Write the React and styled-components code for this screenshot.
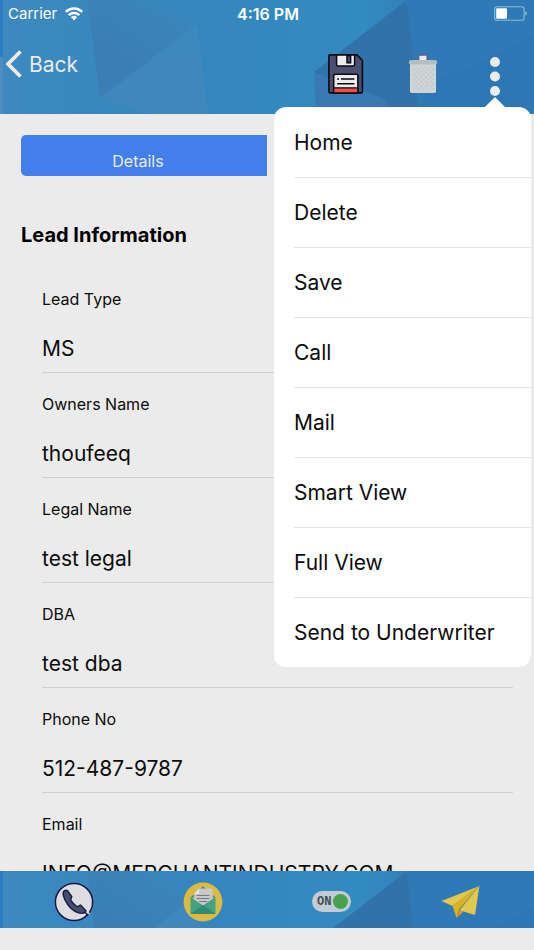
import { useState } from "react";
import styled, { createGlobalStyle } from "styled-components";

const fields = [
  { id: "leadType", label: "Lead Type", value: "MS" },
  { id: "owner", label: "Owners Name", value: "thoufeeq" },
  { id: "legal", label: "Legal Name", value: "test legal" },
  { id: "dba", label: "DBA", value: "test dba" },
  { id: "phone", label: "Phone No", value: "512-487-9787" },
  { id: "email", label: "Email", value: "INFO@MERCHANTINDUSTRY.COM" },
];

const menuItems = [
  "Home",
  "Delete",
  "Save",
  "Call",
  "Mail",
  "Smart View",
  "Full View",
  "Send to Underwriter",
];

export default function App() {
  const [menuOpen, setMenuOpen] = useState(true);
  const [active, setActive] = useState(true);

  return (
    <Screen>
      <GlobalStyle />
      <Header>
        <Facets id="head" />
        <StatusBar>
          <Carrier>
            Carrier <WifiIcon />
          </Carrier>
          <Clock>4:16 PM</Clock>
          <BatteryIcon />
        </StatusBar>
        <NavBar>
          <BackLink href="#back">
            <ChevronIcon />
            Back
          </BackLink>
          <Actions>
            <IconButton $width={36} aria-label="Save">
              <FloppyIcon />
            </IconButton>
            <IconButton $width={30} aria-label="Delete">
              <TrashIcon />
            </IconButton>
            <IconButton
              $width={26}
              aria-label="More"
              onClick={() => setMenuOpen(!menuOpen)}>
              <DotsIcon />
            </IconButton>
          </Actions>
        </NavBar>
        {menuOpen && (
          <Menu>
            {menuItems.map((item) => (
              <MenuItem key={item}>
                <MenuButton>{item}</MenuButton>
              </MenuItem>
            ))}
          </Menu>
        )}
      </Header>

      <Content>
        <Tabs>
          <Tab>Details</Tab>
        </Tabs>
        <Title>Lead Information</Title>
        <Form>
          {fields.map(({ id, label, value }) => (
            <Field key={id}>
              <Label htmlFor={id}>{label}</Label>
              <Input id={id} defaultValue={value} />
            </Field>
          ))}
        </Form>
      </Content>

      <Toolbar>
        <Facets id="foot" />
        <IconButton $width={40} aria-label="Call">
          <PhoneIcon />
        </IconButton>
        <IconButton $width={40} aria-label="Mail">
          <MailIcon />
        </IconButton>
        <Switch $on={active}>
          <SwitchInput
            type="checkbox"
            aria-label="Active"
            checked={active}
            onChange={() => setActive(!active)}
          />
          <span>{active ? "ON" : "OFF"}</span>
          <Knob $on={active} />
        </Switch>
        <IconButton $width={40} aria-label="Send">
          <PlaneIcon />
        </IconButton>
      </Toolbar>
    </Screen>
  );
}

//Icons
function Facets({ id }) {
  return (
    <FacetSvg viewBox="0 0 534 114" preserveAspectRatio="xMidYMin slice">
      <defs>
        <linearGradient id={`${id}-base`} x1="0" x2="1" y1="0" y2="0">
          <stop offset="0" stopColor="#3d89c0" />
          <stop offset="0.4" stopColor="#3486be" />
          <stop offset="0.68" stopColor="#328bc1" />
          <stop offset="0.8" stopColor="#307cb8" />
          <stop offset="1" stopColor="#2b75b4" />
        </linearGradient>
        <linearGradient
          id={`${id}-dark`}
          gradientUnits="userSpaceOnUse"
          x1="120"
          x2="160"
          y1="60"
          y2="0">
          <stop offset="0" stopColor="#3a7fb3" />
          <stop offset="1" stopColor="#3985bb" />
        </linearGradient>
        <linearGradient id={`${id}-quad`} x1="0" x2="0" y1="0" y2="1">
          <stop offset="0" stopColor="#3c88bd" />
          <stop offset="1" stopColor="#4087bb" />
        </linearGradient>
      </defs>
      <rect width="534" height="114" fill={`url(#${id}-base)`} />
      <path d="M0 0H3V57H0z" fill="#2a7cc4" />
      <path d="M0 57H3V114H0z" fill="#4f8dc0" />
      <path d="M87 0H140L197 24L100 98z" fill={`url(#${id}-dark)`} />
      <path d="M197 24L208 114H148L100 98z" fill={`url(#${id}-quad)`} />
      <path d="M407 0L423 114H390L314 72z" fill="#3272aa" />
      <path d="M314 72L385 99L392 114H316z" fill="#3979b3" />
      <path d="M407 0H534V40L430 87L419 114z" fill="#2f7ab6" />
      <path d="M534 36V114H419L430 84z" fill="#2d77b5" />
    </FacetSvg>
  );
}

function WifiIcon() {
  return (
    <svg width="18" height="14" viewBox="0 0 18 14" aria-hidden="true">
      <g fill="none" stroke="#fff" strokeWidth="2.4">
        <path d="M.8 4.8A11.8 11.8 0 0 1 17.2 4.8" />
        <path d="M3.7 8.1A7.7 7.7 0 0 1 14.3 8.1" />
      </g>
      <path d="M9 13.4L5.9 10.2A4.5 4.5 0 0 1 12.1 10.2z" fill="#fff" />
    </svg>
  );
}

function BatteryIcon() {
  return (
    <svg width="34" height="15" viewBox="0 0 34 15" aria-hidden="true">
      <rect
        x=".7"
        y=".7"
        width="29.4"
        height="13.6"
        rx="2.6"
        fill="none"
        stroke="#8dbadd"
        strokeWidth="1.1"
      />
      <rect x="2.2" y="2.3" width="10.8" height="10.4" rx="1" fill="#fff" />
      <path d="M31.3 5.2Q33 5.7 33 7.5T31.3 9.8z" fill="#8dbadd" />
    </svg>
  );
}

function ChevronIcon() {
  return (
    <svg width="17" height="28" viewBox="0 0 17 28" aria-hidden="true">
      <path
        d="M15.5 1.5L3 14L15.5 26.5"
        fill="none"
        stroke="#ebebeb"
        strokeWidth="3.8"
      />
    </svg>
  );
}

function FloppyIcon() {
  return (
    <svg width="36" height="40" viewBox="0 0 36 40">
      <path
        d="M1.6.9H29L34.4 6.5V37.2Q34.4 38.9 32.8 38.9H2.4Q.9 38.9.9 37.2V2Q.9.9 1.6.9z"
        fill="#4b5072"
        stroke="#080a12"
        strokeWidth="1.6"
      />
      <path
        d="M8.6 1V10.8Q8.6 12 9.8 12H25.4Q26.6 12 26.6 10.8V1z"
        fill="#ececec"
        stroke="#080a12"
        strokeWidth="1.5"
      />
      <rect
        x="19"
        y="1.6"
        width="3.6"
        height="7.2"
        fill="#4b5072"
        stroke="#080a12"
        strokeWidth="1.5"
      />
      <path
        d="M5.7 38.8V21.8Q5.7 20.3 7.2 20.3H28.4Q29.9 20.3 29.9 21.8V38.8z"
        fill="#ececec"
        stroke="#080a12"
        strokeWidth="1.6"
      />
      <path
        d="M5.7 33.8H29.9V38.9H5.7z"
        fill="#f04c40"
        stroke="#080a12"
        strokeWidth="1.2"
      />
      <path
        d="M9.2 25H11M13 25H26.4M9.2 29.7H26.4"
        stroke="#080a12"
        strokeWidth="1.5"
      />
    </svg>
  );
}

function TrashIcon() {
  return (
    <svg width="30" height="40" viewBox="0 0 30 40">
      <defs>
        <pattern id="mesh" width="4.8" height="4.8" patternUnits="userSpaceOnUse">
          <circle cx="1.2" cy="1.2" r=".8" fill="#b0babc" />
          <circle cx="3.6" cy="3.6" r=".8" fill="#b0babc" />
        </pattern>
      </defs>
      <rect
        x="10.6"
        y="1"
        width="8.6"
        height="6"
        rx="1"
        fill="#e8ebec"
        stroke="#565f92"
        strokeWidth="1.5"
      />
      <path d="M2 9H28V37.2Q28 39 26.2 39H3.8Q2 39 2 37.2z" fill="#d0d6d8" />
      <rect x="4" y="12.5" width="22" height="24" fill="url(#mesh)" />
      <rect x="1" y="6" width="28" height="4.4" rx="1.6" fill="#b4bdc0" />
    </svg>
  );
}

function DotsIcon() {
  return (
    <svg width="10" height="40" viewBox="0 0 10 40" overflow="visible">
      <g fill="#ebebeb">
        <circle cx="5" cy="8" r="5" />
        <circle cx="5" cy="22.5" r="5" />
        <circle cx="5" cy="37" r="5" />
      </g>
    </svg>
  );
}

function PhoneIcon() {
  return (
    <svg width="40" height="40" viewBox="0 0 40 40">
      <circle
        cx="20"
        cy="20"
        r="18.6"
        fill="#dedee0"
        stroke="#17184a"
        strokeWidth="1.5"
      />
      <path
        d="M10.6 8.6C9.3 9.4 8.8 11.3 9.4 13.6C10.8 19.5 15.6 26.4 21 29.4C24.6 31.3 28.8 32 31.1 30.4L32 28.8L26.6 23L23.6 24.6C22 24.5 17 19.5 16.7 17.5L17.8 14.6L13.4 8.6Q12 7.8 10.6 8.6z"
        fill="#41506b"
        stroke="#17184a"
        strokeWidth="1.4"
      />
      <path d="M31 29.5L33.5 34" stroke="#17184a" strokeWidth="1.4" />
      <path d="M33.2 29.8L35.6 32" stroke="#dedee0" strokeWidth="1.4" />
    </svg>
  );
}

function MailIcon() {
  return (
    <svg width="40" height="40" viewBox="0 0 40 40">
      <circle cx="20" cy="20" r="19.4" fill="#dab945" />
      <path d="M7.5 15.5L20 4.5L32.5 15.5z" fill="#2d8a71" />
      <path d="M16 6.5H28.2Q29.8 6.5 29.8 8V23H10.8V12z" fill="#c6c8c9" />
      <path d="M16 6.5V12H10.8z" fill="#e4e5e5" />
      <path d="M7.5 15L20 23.5L32.5 15V32H7.5z" fill="#43a186" />
      <path d="M7.5 32L20 23L32.5 32z" fill="#2f8b72" />
      <path
        d="M13.5 13.5H26.5M13.5 16.5H26.5M16 19.5H24"
        stroke="#777b7d"
        strokeWidth="1.1"
      />
    </svg>
  );
}

function PlaneIcon() {
  return (
    <svg width="40" height="34" viewBox="0 0 40 34">
      <path d="M38.4 1L.5 16L11.5 21z" fill="#e2c84e" />
      <path d="M38.4 1L11.5 21L15.5 33L18 24.5z" fill="#dcb31a" />
      <path d="M38.4 1L18.5 25.2L34 30z" fill="#e3c850" />
      <path d="M18.5 25.2L15.5 33L22.5 26.5z" fill="#ec961c" />
    </svg>
  );
}

//Styles
const GlobalStyle = createGlobalStyle`
  * {
    box-sizing: border-box;
  }
  body {
    margin: 0;
    background: #ebebeb;
    color: #0c0c0c;
    font-family: Inter, "Liberation Sans", sans-serif;
  }
  button, input {
    font: inherit;
    color: inherit;
    border: none;
    background: none;
    padding: 0;
  }
`;

const Screen = styled.div`
  display: flex;
  flex-direction: column;
  height: 100vh;
  padding-bottom: 22px;
`;

const Header = styled.header`
  position: relative;
  z-index: 1;
  color: #fff;
`;

const FacetSvg = styled.svg`
  position: absolute;
  inset: 0;
  width: 100%;
  height: 100%;
  z-index: -1;
`;

const StatusBar = styled.div`
  display: grid;
  grid-template-columns: 1fr auto 1fr;
  align-items: center;
  height: 27px;
  padding: 0 6px 0 8px;
  font-size: 15px;
  > svg {
    justify-self: end;
  }
`;

const Carrier = styled.span`
  display: flex;
  align-items: center;
  gap: 8px;
`;

const Clock = styled.span`
  font-size: 16px;
  font-weight: 600;
`;

const NavBar = styled.nav`
  display: flex;
  align-items: flex-start;
  justify-content: space-between;
  height: 87px;
  padding: 23px 26px 0 5px;
`;

const BackLink = styled.a`
  display: flex;
  align-items: center;
  gap: 7px;
  height: 28px;
  color: #ebebeb;
  font-size: 21px;
  text-decoration: none;
`;

const Actions = styled.div`
  display: flex;
  gap: 44px;
  padding-top: 4px;
`;

const IconButton = styled.button`
  display: flex;
  align-items: center;
  justify-content: center;
  width: ${({ $width }) => $width}px;
  height: 40px;
  cursor: pointer;
`;

const Menu = styled.ul`
  position: absolute;
  top: 107px;
  right: 3px;
  width: 257px;
  margin: 0;
  padding: 0 0 0 20px;
  list-style: none;
  border-radius: 12px;
  background: #fff;
  color: #0c0c0c;
  &::before {
    content: "";
    position: absolute;
    top: -10px;
    right: 25px;
    border: 11px solid transparent;
    border-top: none;
    border-bottom: 11px solid #fff;
  }
`;

const MenuItem = styled.li`
  height: 70px;
  & + & {
    border-top: 1px solid #e3e3e3;
  }
`;

const MenuButton = styled.button`
  width: 100%;
  height: 100%;
  font-size: 21px;
  text-align: left;
  cursor: pointer;
`;

const Content = styled.main`
  flex: 1;
  min-height: 0;
  overflow: hidden;
  padding: 21px 21px 0;
`;

const Tabs = styled.div`
  display: flex;
`;

const Tab = styled.button`
  width: 50%;
  height: 41px;
  padding: 10px 12px 0 0;
  border-radius: 5px 0 0 5px;
  background: #427fea;
  color: #ebebeb;
  font-size: 16px;
`;

const Title = styled.h2`
  margin: 47px 0 21px;
  font-size: 20px;
  line-height: 24px;
  font-weight: 700;
  color: #000;
`;

const Form = styled.form`
  padding-left: 21px;
`;

const Field = styled.div`
  display: flex;
  flex-direction: column;
  gap: 24px;
  padding: 21px 0 9px;
  border-bottom: 1px solid #cfcfcf;
`;

const Label = styled.label`
  font-size: 16px;
  line-height: 20px;
`;

const Input = styled.input`
  width: 100%;
  height: 30px;
  font-size: 21px;
  outline: none;
`;

const Toolbar = styled.footer`
  position: relative;
  z-index: 0;
  display: grid;
  grid-template-columns: repeat(4, 1fr);
  align-items: center;
  justify-items: center;
  height: 57px;
  padding: 4px 9px 0;
`;

const Switch = styled.label`
  display: flex;
  align-items: center;
  justify-content: space-between;
  flex-direction: ${({ $on }) => ($on ? "row" : "row-reverse")};
  width: 39px;
  height: 21px;
  padding: 0 3px 0 5px;
  border-radius: 11px;
  background: #c3ccd2;
  color: #3c4e5c;
  font: bold 12px "Liberation Mono", monospace;
  cursor: pointer;
`;

const SwitchInput = styled.input`
  position: absolute;
  opacity: 0;
`;

const Knob = styled.span`
  width: 15px;
  height: 15px;
  border-radius: 50%;
  background: ${({ $on }) => ($on ? "#48a24b" : "#8a949b")};
`;
